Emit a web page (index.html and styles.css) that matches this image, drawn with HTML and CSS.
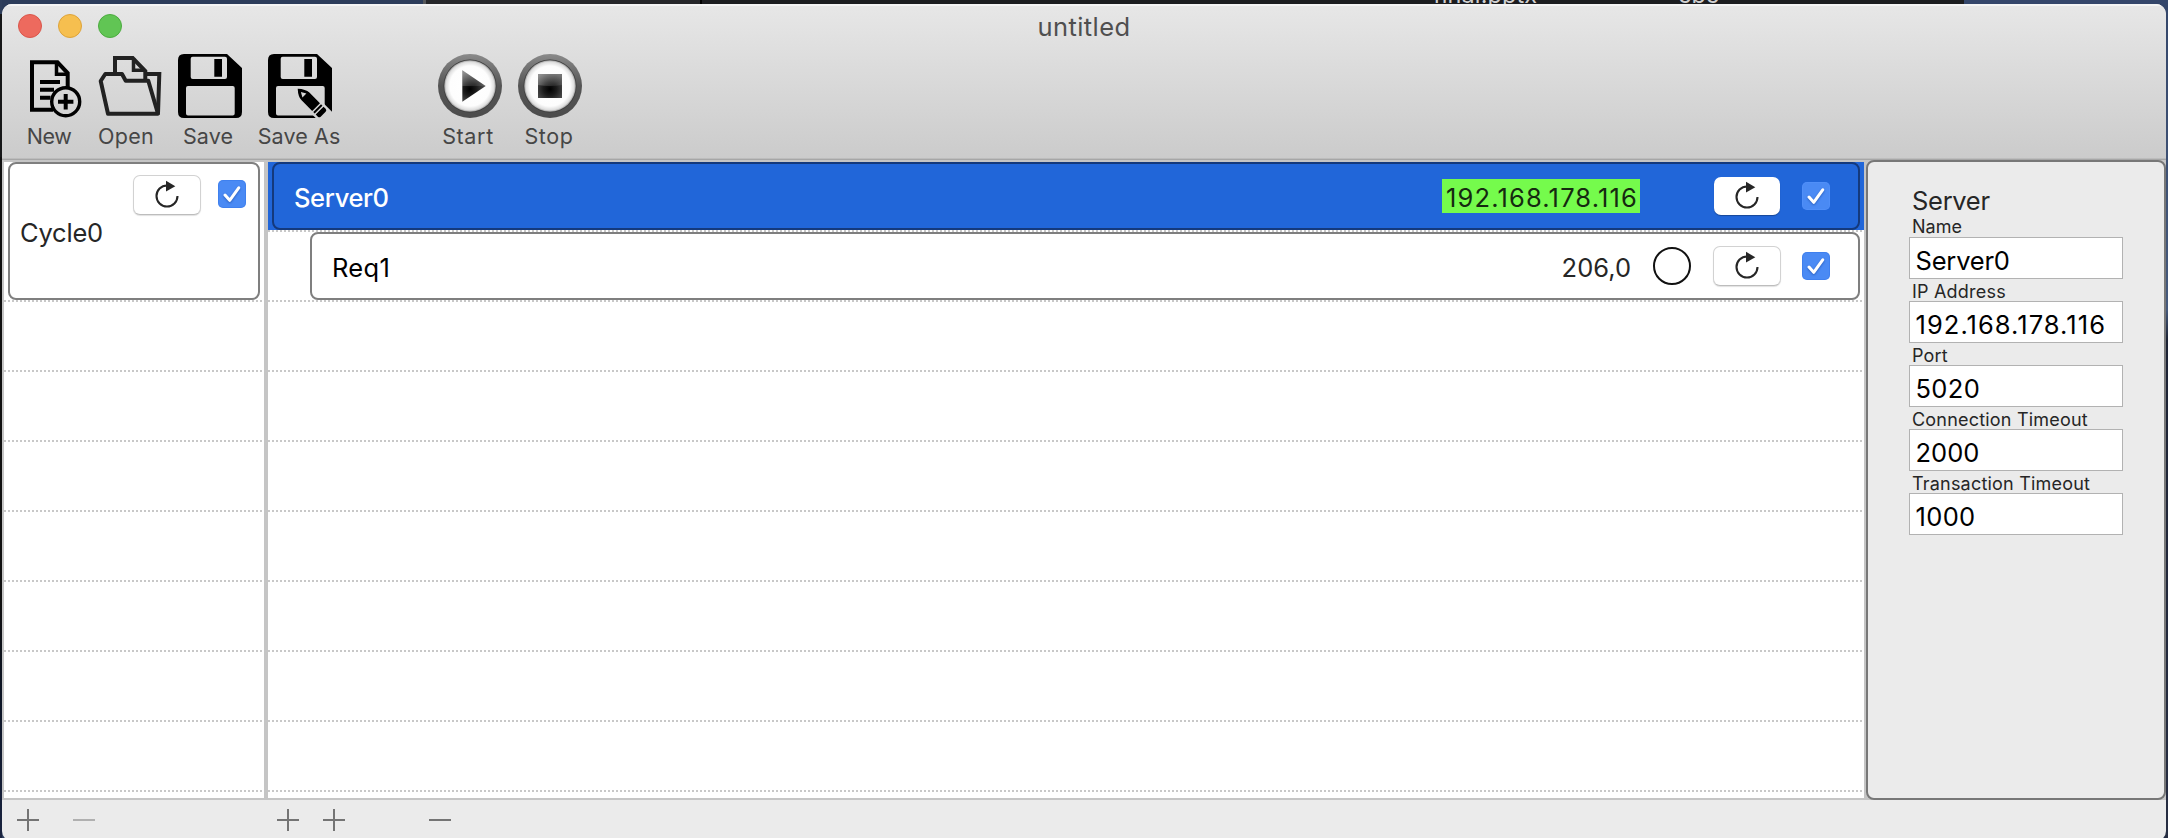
FILE: index.html
```
<!DOCTYPE html>
<html lang="en">
<head>
<meta charset="utf-8">
<title>untitled</title>
<link rel="stylesheet" href="styles.css">
</head>
<body>
<svg class="defs" aria-hidden="true">
  <defs>
    <linearGradient id="ring" x1="0" y1="0" x2="0" y2="1"><stop offset="0" stop-color="#8a8a8a"/><stop offset=".5" stop-color="#555"/><stop offset="1" stop-color="#4c4c4c"/></linearGradient>
    <radialGradient id="face"><stop offset="0" stop-color="#fff"/><stop offset=".78" stop-color="#fdfdfd"/><stop offset=".93" stop-color="#dedede"/><stop offset="1" stop-color="#9a9a9a"/></radialGradient>
    <radialGradient id="ink" gradientUnits="userSpaceOnUse" cx="32" cy="35" r="17"><stop offset="0" stop-color="#000"/><stop offset=".4" stop-color="#1c1c1c"/><stop offset="1" stop-color="#5c5c5c"/></radialGradient>
    <linearGradient id="gloss" gradientUnits="userSpaceOnUse" x1="22" y1="16" x2="34" y2="33"><stop offset="0" stop-color="#fff" stop-opacity=".36"/><stop offset="1" stop-color="#fff" stop-opacity=".1"/></linearGradient>
    <mask id="pencil-cut"><rect x="-2" y="-2" width="70" height="70" fill="#fff"/><path transform="translate(29.7 34.7) rotate(45)" d="M20 -8H50V8H20z" fill="#000"/></mask>
    <symbol id="floppy" viewBox="0 0 64 64"><path fill-rule="evenodd" d="M6 0H49L64 14V58q0 6-6 6H6q-6 0-6-6V6q0-6 6-6zM14.7 2.8q-2 0-2 2V23q0 2 2 2H47q2 0 2-2V4.800q0-2-2-2zM36.300 5H44V22.700H36.300zM10 32q-2 0-2 2V59.500q0 2 2 2H54.700q2 0 2-2V34q0-2-2-2z"/></symbol>
    <symbol id="refresh" viewBox="0 0 28 28" overflow="visible"><path d="M24.500 14A10.500 10.500 0 1 1 14 3.500" fill="none" stroke="#262626" stroke-width="2.100"/><path d="M13-1.200L22.300 4.300L13 9.600z" fill="#262626"/></symbol>
    <symbol id="check" viewBox="0 0 28 28"><path d="M7 15L11.700 20.300L20.700 7.800" fill="none" stroke="#fff" stroke-width="3" stroke-linecap="round" stroke-linejoin="round"/></symbol>
    <symbol id="plus" viewBox="0 0 22 22"><path d="M0 11H22M11 0V22" stroke="currentColor" stroke-width="2"/></symbol>
    <symbol id="minus" viewBox="0 0 22 22"><path d="M0 11H22" stroke="currentColor" stroke-width="2"/></symbol>
  </defs>
</svg>
<div class="desktop">
  <div class="behind"><span class="file-a">final.pptx</span><span class="file-b">cbc</span></div>
  <div class="window">
    <header class="header">
      <div class="titlebar">
        <div class="lights"><i class="light red"></i><i class="light yellow"></i><i class="light green"></i></div>
        <h1 class="title">untitled</h1>
      </div>
      <nav class="toolbar">
        <button class="tool new">
          <svg viewBox="-2 0 64 64" fill="none" stroke="#000" stroke-width="4"><path d="M33 55.700H12V8.300H37.500L47.700 19V34"/><path d="M36.500 8.300V20.300H48" stroke-width="3.500"/><path d="M20 28H40M20 35.700H34M20 43.700H30.500"/><circle cx="45.700" cy="47.700" r="14" stroke-width="3.400"/><path d="M38 47.700H53.400M45.700 40V55.400"/></svg>
          <span>New</span></button>
        <button class="tool open">
          <svg viewBox="-4 0 64 64" fill="none" stroke="#222" stroke-width="4"><path stroke-linejoin="round" d="M2.700 27L7.300 20H24L27.700 26.700H50.300L60 59.700H10z"/><path d="M47 20H61.300L60 59.700M17 19V4H34.700L47.300 17V26"/><path d="M35.500 4V16.300H47" stroke-width="3.500"/></svg>
          <span>Open</span></button>
        <button class="tool save">
          <svg viewBox="-2 0 64 64"><use href="#floppy" width="64" height="64"/></svg>
          <span>Save</span></button>
        <button class="tool save-as">
          <svg viewBox="-1 0 64 64"><g mask="url(#pencil-cut)"><use href="#floppy" width="64" height="64"/></g><g transform="translate(29.700 34.700) rotate(45)"><path fill-rule="evenodd" d="M0 0Q6-5.500 11-5.500H26V5.500H11Q6 5.500 0 0zM4.500 0L9.500 2.800V-2.800z"/><path d="M27.500-5.500H29.500V5.500H27.500zM31-5.500H34Q36-5.500 36-3.500V3.500Q36 5.500 34 5.500H31z"/></g></svg>
          <span>Save As</span></button>
        <button class="tool start">
          <svg viewBox="-2 0 64 64"><circle cx="32" cy="32" r="32" fill="url(#ring)"/><circle cx="32" cy="32" r="26.500" fill="#3c3c3c"/><circle cx="32" cy="32" r="25.800" fill="url(#face)"/><path d="M24.300 16.300L47.700 32L24.300 47.700z" fill="url(#ink)"/><path d="M24.300 16.300L47.700 32H24.300z" fill="url(#gloss)"/></svg>
          <span>Start</span></button>
        <button class="tool stop">
          <svg viewBox="-1 0 64 64"><circle cx="32" cy="32" r="32" fill="url(#ring)"/><circle cx="32" cy="32" r="26.500" fill="#3c3c3c"/><circle cx="32" cy="32" r="25.800" fill="url(#face)"/><path d="M20 20H44V44H20z" fill="url(#ink)"/><path d="M20 20H44V31Q32 33 20 31z" fill="url(#gloss)"/></svg>
          <span>Stop</span></button>
      </nav>
    </header>
    <main class="content">
      <section class="list cycles">
        <div class="row tall">
          <div class="card cycle">
            <div class="controls">
              <button class="refresh"><svg><use href="#refresh"/></svg></button>
              <span class="checkbox"><svg><use href="#check"/></svg></span>
            </div>
            <div class="name">Cycle0</div>
          </div>
        </div>
        <div class="row"></div><div class="row"></div><div class="row"></div><div class="row"></div><div class="row"></div><div class="row"></div><div class="row"></div>
      </section>
      <section class="list servers">
        <div class="row">
          <div class="selected">
            <div class="card server">
              <span class="name strong">Server0</span>
              <span class="address">192.168.178.116</span>
              <button class="refresh"><svg><use href="#refresh"/></svg></button>
              <span class="checkbox"><svg><use href="#check"/></svg></span>
            </div>
          </div>
        </div>
        <div class="row">
          <div class="card request">
            <span class="name">Req1</span>
            <span class="value">206,0</span>
            <span class="status"></span>
            <button class="refresh"><svg><use href="#refresh"/></svg></button>
            <span class="checkbox"><svg><use href="#check"/></svg></span>
          </div>
        </div>
        <div class="row"></div><div class="row"></div><div class="row"></div><div class="row"></div><div class="row"></div><div class="row"></div><div class="row"></div>
      </section>
      <aside class="inspector">
        <h2>Server</h2>
        <label class="first"><span class="tight">Name</span><b class="field">Server0</b></label>
        <label><span>IP Address</span><b class="field ip">192.168.178.116</b></label>
        <label><span>Port</span><b class="field wide">5020</b></label>
        <label><span>Connection Timeout</span><b class="field num">2000</b></label>
        <label><span>Transaction Timeout</span><b class="field wide">1000</b></label>
      </aside>
    </main>
    <footer class="footer">
      <svg class="add-cycle"><use href="#plus"/></svg>
      <svg class="remove-cycle"><use href="#minus"/></svg>
      <svg class="add-server"><use href="#plus"/></svg>
      <svg class="add-request"><use href="#plus"/></svg>
      <svg class="remove-item"><use href="#minus"/></svg>
    </footer>
  </div>
</div>
</body>
</html>
```
FILE: styles.css
```
* { box-sizing: border-box; }
body { margin: 0; font-family: Inter, "Liberation Sans", sans-serif; font-size: 25.5px; line-height: 30px; color: #262626; }
.defs { position: absolute; width: 0; height: 0; }
button { padding: 0; border: 0; background: none; font: inherit; color: inherit; }
svg { display: block; overflow: visible; }

.desktop {
  position: relative; width: 2168px; height: 838px; padding: 4px 2px 0; overflow: hidden;
  background:
    linear-gradient(#2f3f5c 0 14px, #161718 14px 157px, #101010 157px 600px, #0d1526 700px, #1a2440) 0 0 / 2px 100% no-repeat,
    linear-gradient(#34466a 0, #45597c 310px, #1c2234 340px, #262d42 100%) 100% 0 / 4px 100% no-repeat,
    linear-gradient(90deg, #2c3c5a 0 423px, #55575a 423px 426px, #26272a 426px 700px, #000 700px 702px, #1c1d20 702px 1964px, #34466a 1964px);
}
.behind { position: absolute; left: 0; top: -20px; width: 100%; height: 30px; font-size: 23.5px; color: #d0d0d0; }
.file-a { position: absolute; left: 1433px; top: 0; letter-spacing: .1px; }
.file-b { position: absolute; left: 1678px; top: 0; }

.window { position: relative; display: flex; flex-direction: column; width: 2164px; height: 837px; border-radius: 10px; overflow: hidden; background: #ebebeb; }

.header { height: 156px; background: linear-gradient(#e7e7e7, #cbcbcb); box-shadow: inset 0 2px 0 #f4f4f4, inset 0 -1px 0 #a6a6a6, inset 0 -2px 0 #bcbcbc; }
.titlebar { display: grid; grid-template-columns: 300px 1fr 300px; height: 50px; }
.lights { display: flex; gap: 16px; padding: 10px 0 0 16px; }
.light { width: 24px; height: 24px; border-radius: 50%; border: 1px solid; }
.red { background: #ed6a5e; border-color: #d9564b; }
.yellow { background: #f6bf4f; border-color: #dda33a; }
.green { background: #61c554; border-color: #4cab3f; }
.title { margin: 8px 0 0; text-align: center; font-size: 25.5px; font-weight: 400; letter-spacing: .4px; color: #4f4f4f; }
.toolbar { display: flex; padding-left: 16px; }
.tool { display: grid; grid-template-rows: 64px 32px; row-gap: 3px; justify-content: center; justify-items: center; width: 64px; font-size: 21.5px; line-height: 30px; color: #464646; white-space: nowrap; letter-spacing: .1px; }
.tool svg { width: 64px; height: 64px; }
.new span { letter-spacing: -.4px; padding-right: 2px; }
.open { margin-left: 12px; }
.open span { letter-spacing: .3px; }
.save { margin-left: 18px; }
.save-as { margin-left: 27px; }
.start { margin-left: 105px; letter-spacing: .65px; }
.stop { margin-left: 17px; letter-spacing: .6px; }

.content { display: flex; height: 640px; background: #c5c5c5; }
.list { height: 636px; margin-top: 2px; background: #fff; overflow: hidden; }
.cycles { width: 260px; margin-left: 2px; }
.servers { width: 1596px; margin-left: 4px; }
.row { height: 70px; background: repeating-linear-gradient(90deg, #c8c8c8 0 2px, #fff 2px 4px) 0 100% / calc(100% - 2px) 2px no-repeat; }
.tall { height: 140px; }
.card { border: 2px solid #7f7f7f; border-radius: 8px; background: #fff; }
.cycle { height: 138px; width: 252px; margin-left: 4px; padding: 11px 12px 0 10px; }
.controls { display: flex; justify-content: flex-end; gap: 17px; }
.cycle .checkbox { margin-top: 5px; }
.cycle .name { margin-top: 3px; letter-spacing: -.2px; }
.refresh { display: grid; place-items: center; width: 68px; height: 40px; border: 1px solid #d2d2d2; border-bottom-color: #bdbdbd; border-radius: 7px; background: #fff; box-shadow: 0 1px 1px rgba(0, 0, 0, .12); }
.refresh svg { width: 28px; height: 28px; position: relative; top: 1px; }
.checkbox { width: 28px; height: 28px; border-radius: 5px; background: #4a8af4; box-shadow: inset 0 0 0 1px rgba(30, 100, 220, .25); }
.checkbox svg { width: 28px; height: 28px; filter: drop-shadow(0 1px 1px rgba(0, 40, 120, .45)); }

.selected { height: 68px; padding: 0 4px; background: #2166d9; }
.server, .request { display: flex; align-items: center; height: 68px; padding-right: 28px; }
.server { padding-left: 20px; border-color: #14397c; background: #2166d9; color: #fff; }
.server .name { letter-spacing: -.35px; font-weight: 500; }
.server .address { margin: 0 74px 0 auto; width: 198px; height: 34px; padding-left: 4px; line-height: 37px; background: #75fb4c; color: #152a10; letter-spacing: 1.15px; }
.server .refresh { width: 66px; height: 38px; border: 0; margin-right: 22px; box-shadow: 0 1px 1px rgba(0, 0, 0, .3); }
.server .checkbox { box-shadow: inset 0 0 0 1px rgba(90, 150, 255, .4); }
.request { margin: 0 4px 0 42px; padding-left: 20px; }
.request .name { color: #000; letter-spacing: .3px; }
.request .name, .request .value { position: relative; top: 2px; }
.server .name { position: relative; top: 2px; }
.request .value { margin: 0 22px 0 auto; }
.status { width: 38px; height: 38px; border: 2px solid #111; border-radius: 50%; margin-right: 22px; }
.request .refresh { margin-right: 21px; }

.inspector { width: 300px; height: 640px; margin-left: 2px; padding: 24px 41px 0; border: 2px solid #777; border-radius: 8px; background: #ebebeb; }
.inspector h2 { margin: 0 0 0 3px; font-size: 25.5px; font-weight: 400; letter-spacing: -.3px; line-height: 30px; }
.inspector label { display: block; height: 64px; }
.inspector label.first { height: 63px; }
.inspector label span { display: block; height: 22px; padding-left: 3px; font-size: 18px; line-height: 26px; letter-spacing: .2px; }
.inspector label .tight { height: 21px; line-height: 22px; letter-spacing: 0; }
.field { display: block; width: 214px; height: 42px; padding: 0 0 0 5.5px; border: 1px solid #b2b2b2; background: #fff; color: #000; font-weight: 400; line-height: 45px; letter-spacing: -.2px; }
.ip { letter-spacing: 1.05px; }
.wide { letter-spacing: .35px; }
.num { letter-spacing: 0; }

.footer { display: flex; height: 41px; padding: 9px 0 0 15px; color: #747474; }
.footer svg { width: 22px; height: 22px; }
.remove-cycle { margin-left: 34px; color: #b0b0b0; }
.add-server { margin-left: 182px; }
.add-request { margin-left: 24px; }
.remove-item { margin-left: 84px; }
```
